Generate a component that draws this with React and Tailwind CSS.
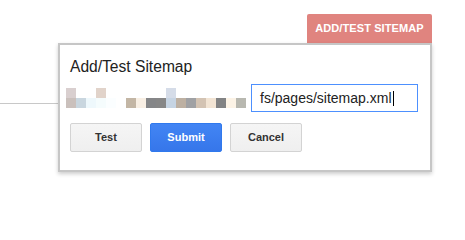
import React from "react";

// blurred url preview, two rows of 10px cells
const TOP_ROW = [
  "bg-[#d9cfcf]", "", "", "bg-[#e1d3ca]", "", "", "", "", "", "",
  "bg-[#d5dce8]", "", "", "", "", "", "", "",
];
const BOTTOM_ROW = [
  "bg-[#cac0bc]", "bg-[#c9d6df]", "bg-[#eef8fc]", "bg-[#f5fcfd]", "bg-[#fbfeff]", "",
  "bg-[#c3b6a5]", "bg-[#f8efe4]", "bg-[#858688]", "bg-[#878787]", "bg-[#c6d4e3]", "bg-[#bdb0a2]",
  "bg-[#a0a1a4]", "bg-[#d3c3b3]", "bg-[#f2e4d4]", "bg-[#828384]", "bg-[#fcf3e6]", "bg-[#b8b8b0]",
];

const GrayButton = ({ children }) => (
  <button className="w-[72px] h-[29px] rounded-[2px] border border-[#d3d3d3] bg-gradient-to-b from-[#f5f5f5] to-[#efefef] text-[11px] font-bold text-[#333]">
    {children}
  </button>
);

const App = () => {
  return (
    <div className="w-[465px] h-[213px] bg-white overflow-hidden font-['Liberation_Sans',Arial,sans-serif]">
      <div className="flex justify-end pt-[14px] pr-[33px]">
        <button className="w-[125px] h-[29px] rounded-t-[2px] bg-[#e0847f] text-[11px] font-bold text-white tracking-[0.1px]">
          ADD/TEST SITEMAP
        </button>
      </div>

      <div className="flex items-start">
        <div className="w-[58px] h-px bg-[#c8c8c8] mt-[60px]" />

        <div className="w-[374px] h-[129px] border-2 border-[#c6c6c6] bg-white shadow-[0_2px_4px_rgba(0,0,0,0.2)] pt-[13px] pl-[10px]">
          <h2 className="text-[15.6px] leading-[18px] text-[#222]">Add/Test Sitemap</h2>

          <div className="flex items-center gap-[5px] mt-[8px] -ml-[4px]">
            <div className="flex flex-col">
              <div className="grid grid-cols-[repeat(18,10px)]">
                {TOP_ROW.map((c, i) => (
                  <div key={i} className={`h-[10px] ${c}`} />
                ))}
              </div>
              <div className="grid grid-cols-[repeat(18,10px)]">
                {BOTTOM_ROW.map((c, i) => (
                  <div key={i} className={`h-[10px] ${c}`} />
                ))}
              </div>
            </div>

            <div className="w-[167px] h-[28px] border border-[#4d90fe] flex items-center pl-[8px] text-[14px] text-[#222]">
              <span>fs/pages/sitemap.xml</span>
              <span className="w-px h-[15px] bg-black ml-[1px]" />
            </div>
          </div>

          <div className="flex gap-[8px] mt-[11px]">
            <GrayButton>Test</GrayButton>
            <button className="w-[72px] h-[29px] rounded-[2px] border border-[#3079ed] bg-gradient-to-b from-[#4285f4] to-[#3676ea] text-[11px] font-bold text-white">
              Submit
            </button>
            <GrayButton>Cancel</GrayButton>
          </div>
        </div>
      </div>
    </div>
  );
};

export default App;
